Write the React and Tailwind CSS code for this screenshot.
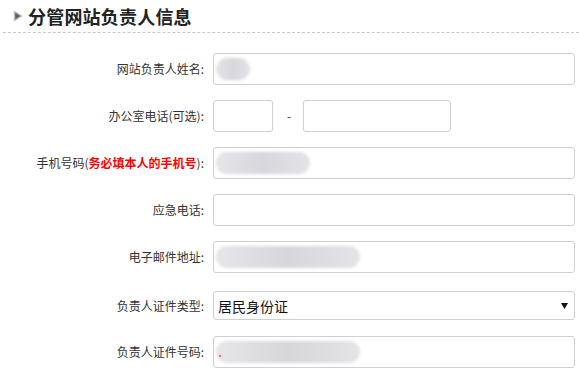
const FONT = { fontFamily: '"Microsoft YaHei", "Noto Sans CJK SC", "Noto Sans", sans-serif' };

// blurred placeholder for masked personal data
function Blur({ w, dot }) {
  return (
    <div className="relative ml-[2px] flex h-[22px] items-center">
      <div
        className="h-[22px] rounded-full bg-gradient-to-r from-[#e6e6ea] via-[#d6d6db] to-[#e4e4e8] blur-[1.5px]"
        style={{ width: w }}
      />
      {dot && <div className="absolute left-[3px] top-[14px] h-[2px] w-[2px] rounded-full bg-[#e05050]" />}
    </div>
  );
}

function Row({ label, className = '', children }) {
  return (
    <div className={`flex items-center ${className}`}>
      <div className="w-[204px] text-right text-[12px] leading-none text-[#333]">{label}</div>
      <div className="ml-[9px] flex items-center">{children}</div>
    </div>
  );
}

function Box({ w = 362, h = 32, children }) {
  return (
    <div
      className="flex items-center rounded-[3px] border border-[#cfcfcf] bg-white"
      style={{ width: w, height: h }}
    >
      {children}
    </div>
  );
}

export default function App() {
  return (
    <div className="h-[371px] w-[579px] overflow-hidden bg-white" style={FONT}>
      {/* section header */}
      <div className="ml-[3px] flex h-[33px] items-center border-b border-dashed border-[#c8c8c8] pb-[1px]">
        <svg width="10" height="12" viewBox="0 0 10 12" className="ml-[10px]">
          <polygon points="1.5,1.5 8.5,6 1.5,10.5" fill="#5e5e5e" stroke="#bdbdbd" strokeWidth="1.4" />
        </svg>
        <span className="ml-[5px] text-[18px] font-bold leading-none tracking-[0.2px] text-[#222]">
          分管网站负责人信息
        </span>
      </div>

      <div className="mt-[20px]">
        <Row label="网站负责人姓名:">
          <Box><Blur w={34} /></Box>
        </Row>

        <Row label="办公室电话(可选):" className="mt-[15px]">
          <Box w={60} />
          <span className="ml-[14px] text-[12px] text-[#333]">-</span>
          <div className="ml-[12px]"><Box w={148} /></div>
        </Row>

        <Row
          label={
            <>
              手机号码(<span className="font-bold text-[#ff0000]">务必填本人的手机号</span>):
            </>
          }
          className="mt-[15px]"
        >
          <Box><Blur w={94} /></Box>
        </Row>

        <Row label="应急电话:" className="mt-[15px]">
          <Box />
        </Row>

        <Row label="电子邮件地址:" className="mt-[15px]">
          <Box><Blur w={144} /></Box>
        </Row>

        <Row label="负责人证件类型:" className="mt-[18px]">
          <Box h={29}>
            <span className="ml-[4px] flex-1 text-[14px] leading-none text-[#111]">居民身份证</span>
            <svg width="7" height="6" viewBox="0 0 7 6" className="mr-[6px]">
              <polygon points="0,0 7,0 3.5,6" fill="#111" />
            </svg>
          </Box>
        </Row>

        <Row label="负责人证件号码:" className="mt-[16px]">
          <Box><Blur w={144} dot /></Box>
        </Row>
      </div>
    </div>
  );
}
